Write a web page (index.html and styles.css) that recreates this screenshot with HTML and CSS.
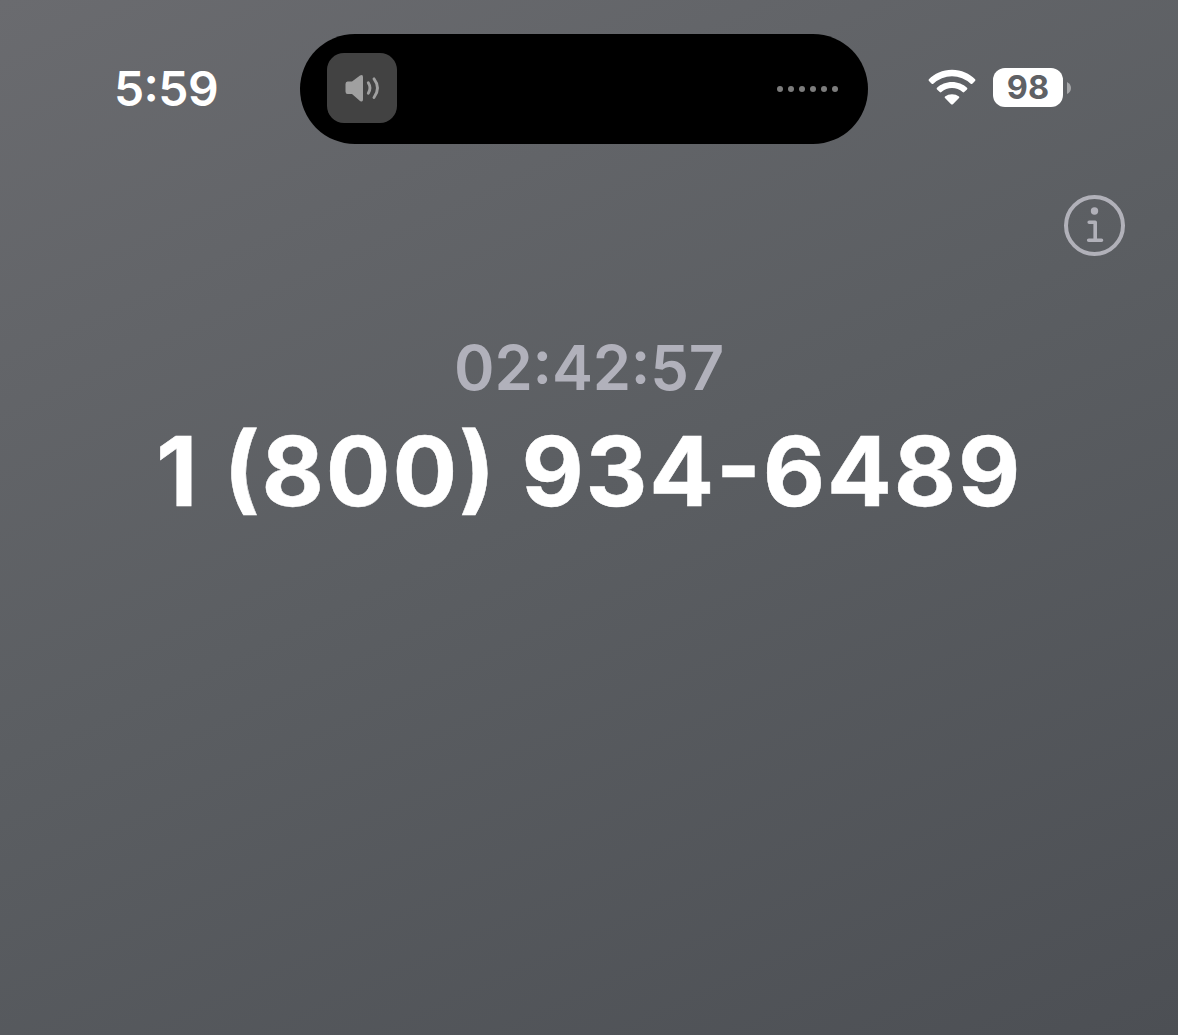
FILE: index.html
```html
<!DOCTYPE html>
<html lang="en">
<head>
    <meta charset="UTF-8">
    <meta name="viewport" content="width=device-width, initial-scale=1.0">
    <title>Call</title>
    <link rel="stylesheet" href="styles.css">
</head>
<body>
    <header class="status-bar">
        <div class="time">5:59</div>

        <div class="island">
            <div class="speaker">
                <svg width="70" height="70" viewBox="0 0 70 70">
                    <path d="M20.5 28.5H25L33 22.6Q36 21 36 24V46.500Q36 49.500 33 47.900L25 41H20.500Q18.500 41 18.500 38.500V31Q18.500 28.500 20.500 28.500Z" fill="#a0a0a0"/>
                    <path d="M41.300 29.800Q44.600 35 41.300 40.300M47 25.900Q54 35 47 44.500" fill="none" stroke="#a0a0a0" stroke-width="2.900" stroke-linecap="round"/>
                </svg>
            </div>
            <div class="dots">
                <span></span><span></span><span></span><span></span><span></span><span></span>
            </div>
        </div>

        <div class="indicators">
            <svg class="wifi" width="48" height="38" viewBox="0 0 48 38">
                <path d="M24 1.700C33.400 1.700 41.700 5.500 47.100 11.300Q47.800 12.200 47 13L44.300 15.700Q43.500 16.400 42.700 15.700A27 27 0 0 0 5.300 15.700Q4.500 16.400 3.700 15.700L1 13Q.2 12.200.9 11.300C6.300 5.500 14.600 1.700 24 1.700Z" fill="#fff"/>
                <path d="M24 14C29.800 14 35.200 16.200 39 19.800Q39.800 20.600 39 21.400L36.200 24.100Q35.400 24.800 34.600 24.100A15.800 15.800 0 0 0 13.400 24.100Q12.600 24.800 11.800 24.100L9 21.400Q8.200 20.600 9 19.800C12.800 16.200 18.200 14 24 14Z" fill="#fff"/>
                <path d="M24 26.200Q28 26.200 31 28.500Q31.800 29.300 31 30.100L24.900 36.200Q24 37 23.100 36.200L17 30.100Q16.200 29.300 17 28.500Q20 26.200 24 26.200Z" fill="#fff"/>
            </svg>
            <div class="battery">98</div>
            <svg width="4" height="12" viewBox="0 0 4 12">
                <path d="M0 0Q4 2 4 6T0 12Z" fill="#a5a6a8"/>
            </svg>
        </div>
    </header>

    <main class="call">
        <div class="toolbar">
            <svg width="62" height="62" viewBox="0 0 62 62">
                <circle cx="31.500" cy="31.500" r="28.500" fill="none" stroke="#b1b1b9" stroke-width="4"/>
                <circle cx="31.500" cy="17" r="3.700" fill="#b1b1b9"/>
                <path d="M26.200 28.300H32.200V46.300M25.700 46.300H38.500" fill="none" stroke="#b1b1b9" stroke-width="3.600" stroke-linecap="round" stroke-linejoin="round"/>
            </svg>
        </div>
        <div class="duration">02:42:57</div>
        <h1 class="number">1 (800) 934-6489</h1>
    </main>
</body>
</html>
```
FILE: styles.css
```css
* { box-sizing: border-box; }
body {
    margin: 0;
    min-height: 1035px;
    font-family: Inter, "Liberation Sans", sans-serif;
    color: #fff;
    background: linear-gradient(155deg, #6a6b6f 0%, #5b5e62 48%, #4c4f54 100%);
}
svg { display: block; }

/* raised colons and parentheses next to digits */
.time, .duration, .number { font-feature-settings: "case"; }

.status-bar { display: flex; height: 144px; padding-top: 34px; }
.time {
    width: 300px;
    padding-left: 114px;
    font-size: 48px;
    font-weight: 600;
    line-height: 110px;
    letter-spacing: -0.6px;
}
.island {
    display: flex;
    align-items: center;
    justify-content: space-between;
    width: 568px;
    height: 110px;
    padding: 0 30px 2px 27px;
    border-radius: 55px;
    background: #000;
}
.speaker { width: 70px; height: 70px; border-radius: 17px; background: #424242; }
.dots { display: flex; gap: 5px; padding-top: 2px; }
.dots span { width: 6px; height: 6px; border-radius: 50%; background: #7c7c7c; }

.indicators { display: flex; align-items: center; height: 107px; padding-left: 59.500px; }
.wifi { margin: 0 17.500px 2px 0; }
.battery {
    width: 70px;
    height: 39px;
    margin-right: 4px;
    border-radius: 12px;
    background: #fff;
    color: #5f6165;
    font-size: 32.500px;
    font-weight: 700;
    line-height: 40px;
    text-align: center;
}

.toolbar { display: flex; justify-content: flex-end; padding: 50px 53px 0 0; }
.duration {
    margin-top: 72px;
    color: #b1b1bb;
    font-size: 61.500px;
    font-weight: 600;
    line-height: 80px;
    letter-spacing: -0.2px;
    text-align: center;
}
.number {
    margin: 8px 0 0;
    font-size: 96px;
    font-weight: 700;
    line-height: 110px;
    letter-spacing: 1.8px;
    text-align: center;
    -webkit-text-stroke: 0.5px #fff;
}
```
